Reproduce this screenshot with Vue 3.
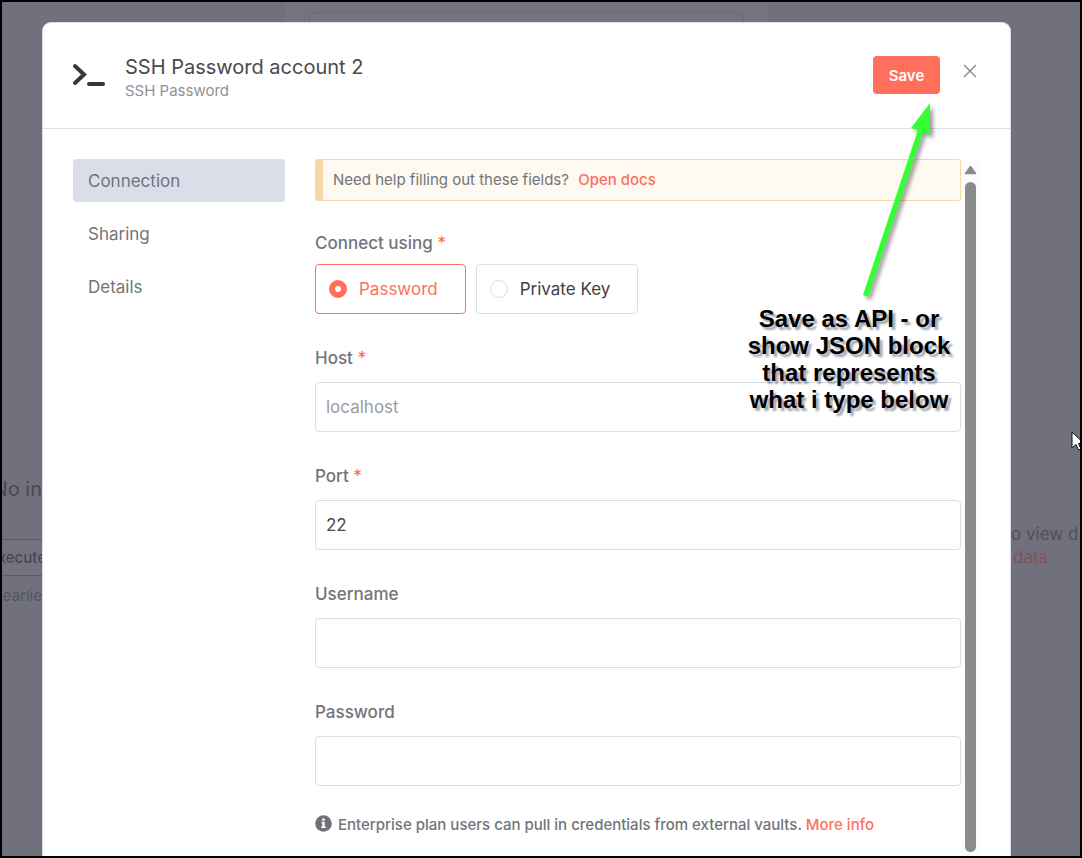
<script setup>
import { ref } from 'vue'

const tabs = ['Connection', 'Sharing', 'Details']
const activeTab = ref('Connection')
const method = ref('password')
const fields = ref([
  { id: 'host', label: 'Host', required: true, type: 'text', placeholder: 'localhost', value: '' },
  { id: 'port', label: 'Port', required: true, type: 'text', placeholder: '', value: '22' },
  { id: 'username', label: 'Username', required: false, type: 'text', placeholder: '', value: '' },
  { id: 'password', label: 'Password', required: false, type: 'password', placeholder: '', value: '' }
])
</script>

<template>
  <div class="frame">
    <div class="backdrop">
      <div class="node-panel"><div class="node-box"></div></div>
      <div class="gutter-left">
        <p class="empty-title">No in</p>
        <div class="execute">xecute</div>
        <p class="hint">earlie</p>
      </div>
      <div class="gutter-right">
        <p>o view d</p>
        <p class="accent">data</p>
      </div>
    </div>

    <main class="modal">
      <header class="head">
        <svg class="terminal" width="34" height="26" viewBox="0 0 34 26" fill="none" stroke="#37373a" stroke-linecap="round" stroke-linejoin="miter">
          <path d="M3 4 L12 12.500 L3 21" stroke-width="4" />
          <path d="M17 22 H31" stroke-width="4" />
        </svg>
        <div class="titles">
          <h1>SSH Password account 2</h1>
          <p>SSH Password</p>
        </div>
        <button class="save" type="button">Save</button>
        <button class="close" type="button" aria-label="Close">
          <svg width="14" height="14" viewBox="0 0 14 14" stroke="#85868d" stroke-width="1.300"><path d="M1 1 L13 13 M13 1 L1 13" /></svg>
        </button>
      </header>

      <div class="body">
        <nav class="tabs">
          <button v-for="t in tabs" :key="t" type="button" :class="{ active: t === activeTab }" @click="activeTab = t">{{ t }}</button>
        </nav>

        <form class="form" @submit.prevent>
          <div class="notice">Need help filling out these fields? <a href="#">Open docs</a></div>

          <fieldset class="methods">
            <legend>Connect using <span class="star">*</span></legend>
            <div class="options">
              <label class="option" :class="{ on: method === 'password' }">
                <input v-model="method" type="radio" name="method" value="password" />Password
              </label>
              <label class="option" :class="{ on: method === 'key' }">
                <input v-model="method" type="radio" name="method" value="key" />Private Key
              </label>
            </div>
          </fieldset>

          <div v-for="f in fields" :key="f.id" class="field">
            <label :for="f.id">{{ f.label }} <span v-if="f.required" class="star">*</span></label>
            <input :id="f.id" v-model="f.value" :type="f.type" :placeholder="f.placeholder" />
          </div>

          <p class="info">
            <svg width="17" height="17" viewBox="0 0 17 17">
              <circle cx="8.500" cy="8.500" r="8.300" fill="#6f7078" />
              <path d="M7.300 3.500h2.400v2.200H7.300zM6.500 6.700h3.200v4.700h1v1.600H6.300v-1.600h1V8.300h-.8z" fill="#fff" />
            </svg>
            <span>Enterprise plan users can pull in credentials from external vaults. <a href="#">More info</a></span>
          </p>
        </form>

        <div class="scroll">
          <svg width="13" height="10" viewBox="0 0 13 10"><path d="M6.500 1.500 L11.500 8.500 H1.500 Z" fill="#8b8b8b" stroke="#8b8b8b" stroke-width="1.500" stroke-linejoin="round" /></svg>
          <div class="thumb"></div>
        </div>
      </div>

      <svg class="arrow" width="80" height="204" viewBox="0 0 80 204">
        <path d="M72 3 L53 28 L60 30 L5 195 L10 197 L65 32 L72 35 Z" fill="#33ff33" />
      </svg>
      <p class="note">Save as API - or<br />show JSON block<br />that represents<br />what i type below</p>
    </main>

    <svg class="cursor" width="13" height="21" viewBox="0 0 13 21">
      <path d="M1 1 V17 L5 13.500 L7.500 19 L10 18 L7.500 12.500 H13 Z" fill="#fff" stroke="#111" />
    </svg>
  </div>
</template>

<style>
body {
  margin: 0;
}
</style>

<style scoped>
* {
  box-sizing: border-box;
}
.frame {
  position: relative;
  display: flex;
  min-height: 100vh;
  padding: 20px 69px 0 40px;
  overflow: hidden;
  border: 2px solid #000;
  background: #71717d;
  font-family: Inter, "Liberation Sans", sans-serif;
  color: #71747a;
}
p,
h1 {
  margin: 0;
}
button,
input {
  font: inherit;
  color: inherit;
}
a {
  color: #ff6f5c;
  font-weight: 500;
  text-decoration: none;
}
.backdrop {
  position: absolute;
  inset: 0;
  display: flex;
  justify-content: space-between;
  white-space: nowrap;
}
.node-panel {
  position: absolute;
  left: 281px;
  right: 310px;
  top: 0;
  height: 60px;
  padding: 10px 25px;
  border: 1px solid #6b6b77;
  border-width: 0 1px;
  background: #76727e;
}
.node-box {
  height: 40px;
  border: 1px solid #696974;
  border-radius: 4px;
}
.gutter-left {
  width: 40px;
  padding-top: 474px;
  color: #484852;
}
.gutter-left > * {
  display: flex;
  justify-content: flex-end;
}
.empty-title {
  font-size: 20px;
  line-height: 26px;
}
.execute {
  width: 44px;
  height: 37px;
  margin: 37px 0 9px;
  border: 1px solid #5a5a65;
  border-width: 1px 0;
  background: #74727e;
  font-size: 15px;
  font-weight: 500;
  line-height: 35px;
}
.hint {
  color: #55555f;
  font-size: 15px;
  line-height: 22px;
}
.gutter-right {
  width: 69px;
  padding-top: 521px;
  color: #505059;
  font-size: 17px;
  line-height: 23px;
}
.accent {
  padding-left: 2px;
  color: #84505a;
}
.modal {
  position: relative;
  display: flex;
  flex: 1;
  flex-direction: column;
  border: 1px solid #dadeea;
  border-bottom: 0;
  border-radius: 9px 9px 0 0;
  background: #fff;
}
.head {
  display: flex;
  align-items: flex-start;
  height: 106px;
  padding: 33px 33px 0 29px;
  border-bottom: 1px solid #dadeea;
}
.terminal {
  margin-top: 6px;
}
.titles {
  flex: 1;
  padding-left: 19px;
}
h1 {
  color: #4a4a4e;
  font-size: 20px;
  font-weight: 400;
  line-height: 22px;
}
.titles p {
  margin-top: 2px;
  color: #909298;
  font-size: 15px;
  line-height: 22px;
}
.save {
  width: 67px;
  height: 38px;
  padding: 0;
  border: 0;
  border-radius: 4px;
  background: #ff6f5c;
  color: #fff;
  font-size: 15px;
  font-weight: 600;
}
.close {
  display: flex;
  margin: 8px 0 0 23px;
  padding: 0;
  border: 0;
  background: none;
}
.body {
  display: flex;
  flex: 1;
  padding: 30px 30px 0;
}
.tabs {
  display: flex;
  flex-direction: column;
  gap: 10px;
  width: 212px;
  margin-right: 30px;
}
.tabs button {
  height: 43px;
  padding: 0 15px;
  border: 0;
  border-radius: 4px;
  background: none;
  font-size: 17px;
  text-align: left;
}
.tabs .active {
  background: #dadee9;
}
.form {
  flex: 1;
}
.notice {
  height: 42px;
  padding-left: 10px;
  border: 1px solid #f5d8a8;
  border-left-width: 8px;
  border-radius: 3px;
  background: #fef9f1;
  font-size: 15px;
  line-height: 40px;
}
.notice a {
  margin-left: 5px;
}
.methods {
  margin: 30px 0 32px;
  padding: 0;
  border: 0;
}
legend,
.field label {
  display: block;
  padding: 0;
  font-size: 17px;
  font-weight: 500;
  line-height: 24px;
}
.star {
  color: #ff6f5c;
}
.options {
  display: flex;
  gap: 10px;
  padding-top: 9px;
}
.option {
  display: flex;
  align-items: center;
  height: 50px;
  padding: 0 27px 0 13px;
  border: 1px solid #dadeea;
  border-radius: 4px;
  color: #3f4045;
  font-size: 17px;
}
.option input {
  width: 18px;
  height: 18px;
  margin: 0 12px 0 0;
  appearance: none;
  border: 1px solid #dadeea;
  border-radius: 50%;
  background: #fff;
}
.option.on {
  border-color: #ff6f5c;
  color: #ff6f5c;
}
.option.on input {
  border: 6px solid #ff6f5c;
}
.field {
  margin-bottom: 32px;
}
.field input {
  display: block;
  width: 100%;
  height: 50px;
  margin-top: 12px;
  padding: 0 10px;
  border: 1px solid #dadeea;
  border-radius: 4px;
  background: #fff;
  color: #47484d;
  font-size: 17px;
}
.field input::placeholder {
  color: #999ba1;
}
.info {
  display: flex;
  gap: 6px;
  margin-top: -4px;
  font-size: 15px;
  font-weight: 500;
  line-height: 22px;
}
.info svg {
  margin-top: 1px;
}
.scroll {
  display: flex;
  flex-direction: column;
  align-items: center;
  width: 19px;
  padding: 6px 0 4px;
  background: #fcfcfc;
}
.thumb {
  flex: 1;
  width: 11px;
  margin-top: 7px;
  border-radius: 6px;
  background: #8b8b8b;
}
.arrow {
  position: absolute;
  top: 77px;
  right: 72px;
  filter: drop-shadow(3px 3px 2px rgba(0, 0, 0, 0.4));
}
.note {
  position: absolute;
  top: 282px;
  right: 46px;
  width: 230px;
  color: #000;
  font-family: "Liberation Sans", Arial, sans-serif;
  font-size: 24px;
  font-weight: 700;
  line-height: 27px;
  text-align: center;
  text-shadow: 3px 3px 2px rgba(50, 60, 80, 0.45);
}
.cursor {
  position: absolute;
  top: 429px;
  right: -4px;
}
</style>
